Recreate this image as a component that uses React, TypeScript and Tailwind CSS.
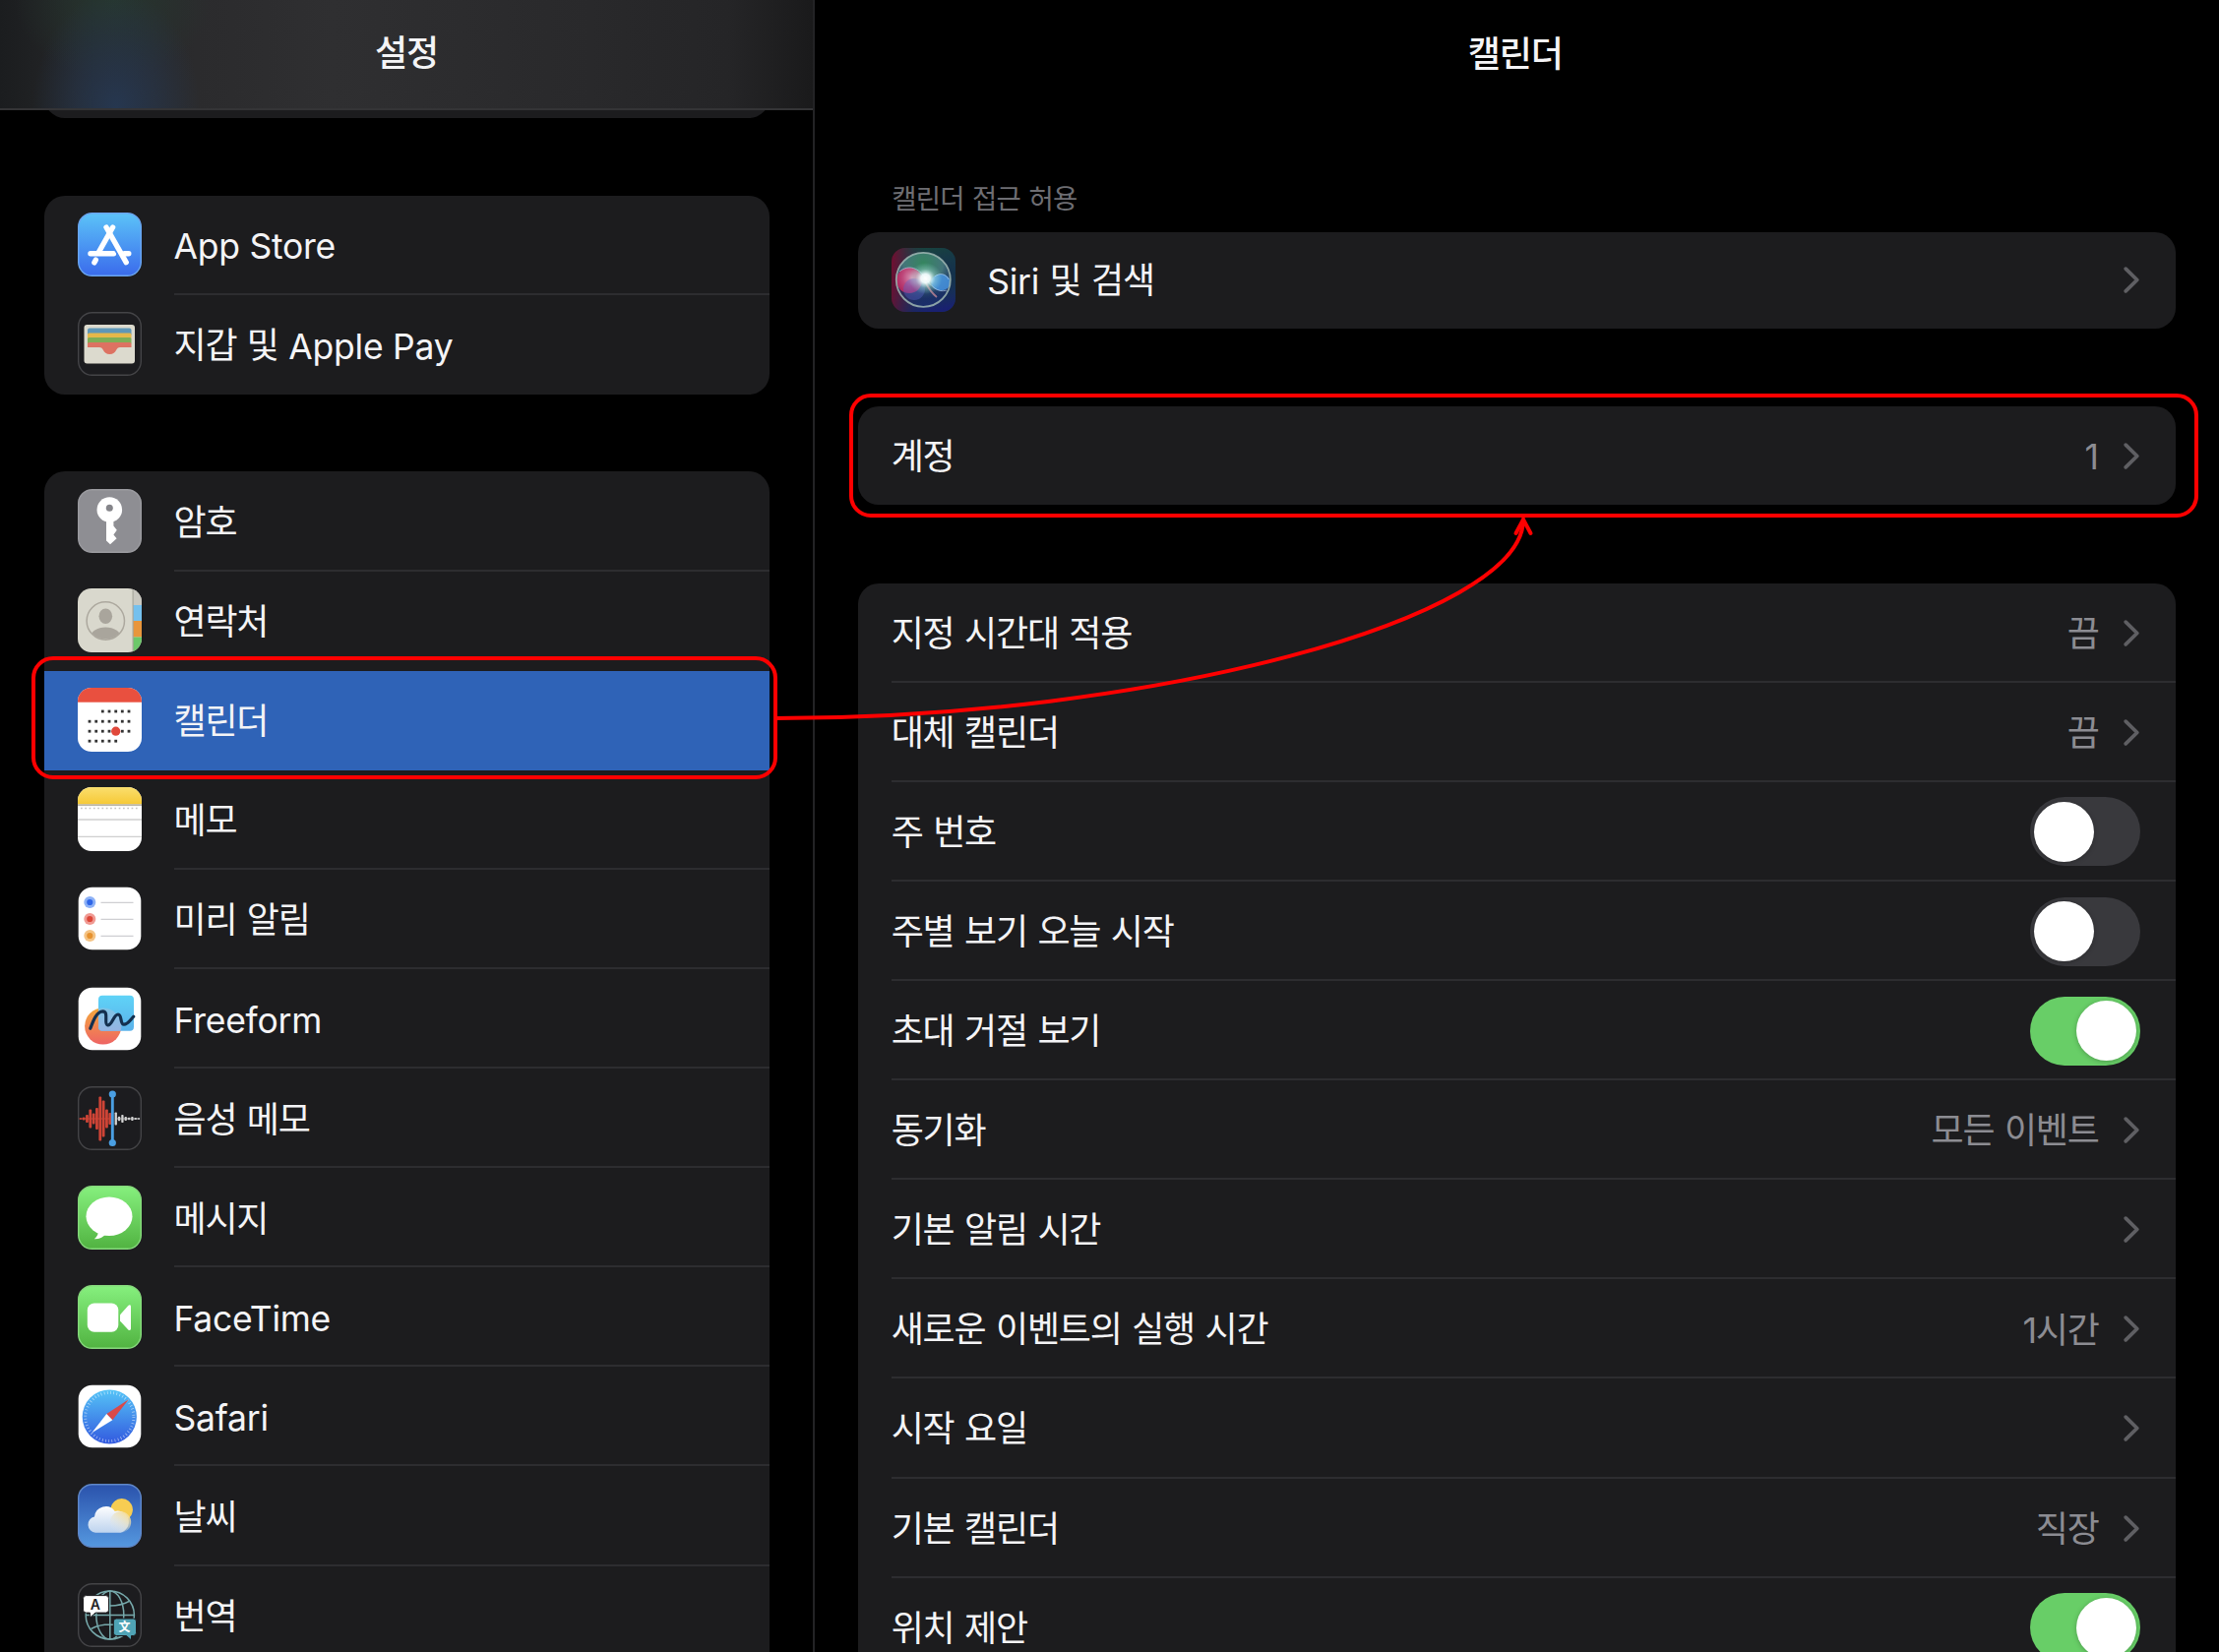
import type { ReactNode } from "react";

/* ---------- icons ---------- */

function Tile({ fill, stroke, children }: { fill: string; stroke?: string; children?: ReactNode }) {
  return (
    <>
      <rect x="0.7" y="0.7" width="63.6" height="63.6" rx="14" fill={fill} stroke={stroke} strokeWidth={stroke ? 1.4 : 0} />
      {children}
    </>
  );
}

function Svg({ children }: { children: ReactNode }) {
  return (
    <svg viewBox="0 0 65 65" className="block size-[65px] shrink-0">
      {children}
    </svg>
  );
}

function VGrad({ id, from, to }: { id: string; from: string; to: string }) {
  return (
    <linearGradient id={id} x1="0" y1="0" x2="0" y2="1">
      <stop offset="0" stopColor={from} />
      <stop offset="1" stopColor={to} />
    </linearGradient>
  );
}

const AppStoreIcon = () => (
  <Svg>
    <VGrad id="as" from="#5cc3f8" to="#3a6bec" />
    <Tile fill="url(#as)" stroke="#6aa5ef" />
    <g stroke="#fff" strokeWidth="5.4" strokeLinecap="round" fill="none">
      <path d="M35.6 15 21.5 40" />
      <path d="M13 41.7h23.5" />
      <path d="M47.5 41.7h4.3" />
      <path d="m29 15 20.2 35.6" />
      <path d="m18.3 48.2-1.4 2.6" />
    </g>
    <path d="m33.4 30.5 9 16" stroke="#4a8cf2" strokeWidth="1.1" />
  </Svg>
);

const WalletIcon = () => (
  <Svg>
    <Tile fill="#1c1c1f" stroke="#444447" />
    <rect x="6.5" y="13" width="51.5" height="39.5" rx="3" fill="#dcdace" />
    <rect x="10" y="16.5" width="44.5" height="8" rx="2" fill="#5f97b8" />
    <rect x="10" y="21.5" width="44.5" height="6" rx="1.5" fill="#e6b84a" />
    <rect x="10" y="26" width="44.5" height="7" rx="1.5" fill="#7fae57" />
    <path d="M10 32.500a1.500 1.500 0 0 1 1.500-1.500h41.500a1.500 1.500 0 0 1 1.500 1.500V36H43c-2 0-3 1-4 3-1 2.200-3 4-6.500 4S27 41.200 26 39c-1-2-2-3-4-3H10z" fill="#dd7262" />
  </Svg>
);

const KeyIcon = () => (
  <Svg>
    <Tile fill="#8e8e93" stroke="#9b9ba0" />
    <circle cx="32.3" cy="21" r="12.8" fill="#fff" />
    <path d="M29 30v22.500l4 3.800 6.600-6.100-3.200-3.600 3.400-4.800-3.400-4.200V30z" fill="#fff" />
    <circle cx="32.3" cy="19.300" r="3.500" fill="#85858a" />
  </Svg>
);

const ContactsIcon = () => (
  <Svg>
    <clipPath id="cc"><rect width="65" height="65" rx="14" /></clipPath>
    <clipPath id="cp"><circle cx="28.300" cy="33" r="18.600" /></clipPath>
    <g clipPath="url(#cc)">
      <rect width="65" height="65" fill="#d9d8cd" />
      <rect x="56" width="9" height="17" fill="#c9c8c0" />
      <rect x="56" y="17" width="9" height="16" fill="#74c0ee" />
      <rect x="56" y="33" width="9" height="16.500" fill="#e8963c" />
      <rect x="56" y="49.500" width="9" height="16" fill="#6cc86a" />
      <rect x="55.500" width="1.200" height="65" fill="#a8a79d" />
    </g>
    <circle cx="28.300" cy="33" r="19.200" fill="none" stroke="#aca89e" strokeWidth="1.500" />
    <ellipse cx="28.300" cy="28.300" rx="6.800" ry="7.800" fill="#a9a59c" />
    <ellipse cx="28.300" cy="50" rx="15.500" ry="10.500" fill="#a9a59c" clipPath="url(#cp)" />
  </Svg>
);

const dotX = [12, 18.7, 25.3, 32, 38.7, 45.3, 52];
const calendarRows = [
  { y: 24, xs: dotX.slice(2) },
  { y: 34.2, xs: dotX },
  { y: 44.2, xs: dotX },
  { y: 54.2, xs: dotX.slice(0, 5) },
];

const CalendarIcon = () => (
  <Svg>
    <clipPath id="cal"><rect width="65" height="65" rx="14" /></clipPath>
    <g clipPath="url(#cal)">
      <rect width="65" height="65" fill="#fff" />
      <rect width="65" height="14.700" fill="#e9503f" />
    </g>
    {calendarRows.map((r) =>
      r.xs.map((x) => <rect key={`${x}-${r.y}`} x={x - 1.4} y={r.y - 1.4} width="2.800" height="2.800" fill="#333" />),
    )}
    <circle cx="38.700" cy="44.200" r="4.600" fill="#e0483b" />
  </Svg>
);

const NotesIcon = () => (
  <Svg>
    <VGrad id="nt" from="#fade6e" to="#f6c935" />
    <clipPath id="nc"><rect width="65" height="65" rx="14" /></clipPath>
    <g clipPath="url(#nc)">
      <rect width="65" height="65" fill="#fff" />
      <rect width="65" height="17.500" fill="url(#nt)" />
      <rect y="17.300" width="65" height="1.800" fill="#b9b5a6" />
      <path d="M3 21.600h60" stroke="#c4c4c4" strokeWidth="1.500" strokeDasharray="1.700 2.600" />
      <path d="M0 33h65M0 50.300h65" stroke="#cfcfcf" strokeWidth="1.300" />
    </g>
  </Svg>
);

const RemindersIcon = () => (
  <Svg>
    <Tile fill="#fff" />
    {[
      { y: 16, a: "#8db1f6", b: "#2e66e8" },
      { y: 33, a: "#f09a93", b: "#dc4638" },
      { y: 50, a: "#f4c384", b: "#e6922f" },
    ].map((d) => (
      <g key={d.y}>
        <circle cx="12.300" cy={d.y} r="6" fill={d.a} />
        <circle cx="12.300" cy={d.y} r="3.100" fill={d.b} />
        <path d={`M23.500 ${d.y + 0.3}h33`} stroke="#cfcfd2" strokeWidth="1.200" />
      </g>
    ))}
  </Svg>
);

const FreeformIcon = () => (
  <Svg>
    <VGrad id="ffc" from="#f3a83c" to="#ee6464" />
    <VGrad id="ffb" from="#5fd3f7" to="#5bb2ea" />
    <VGrad id="ffo" from="#7fc4e6" to="#a3abe0" />
    <clipPath id="ffk"><rect x="21" y="8.700" width="36" height="36" rx="4" /></clipPath>
    <Tile fill="#fff" />
    <circle cx="25.700" cy="40" r="18.600" fill="url(#ffc)" />
    <rect x="21" y="8.700" width="36" height="36" rx="4" fill="url(#ffb)" />
    <circle cx="25.700" cy="40" r="18.600" fill="url(#ffo)" clipPath="url(#ffk)" />
    <path
      d="M12.800 42.300C15.500 35 19 25 25.500 24.800c6.500 0 .5 13.700 5 14.200 4.500.3 6-11.200 10.500-11 4.500.3 1.500 10.200 6 10.200 4 0 6.500-4.700 9.800-8"
      fill="none" stroke="#14304f" strokeWidth="3.200" strokeLinecap="round"
    />
  </Svg>
);

const redBars = [1.5, 3, 8, 19, 11, 22, 45, 37, 19, 12];
const whiteBars = [13, 4.5, 8, 4, 2.5, 4, 2, 1.5];

const VoiceMemosIcon = () => (
  <Svg>
    <Tile fill="#1c1c1f" stroke="#444447" />
    {redBars.map((h, i) => (
      <rect key={i} x={1.4 + i * 3.33} y={33 - h / 2} width="2.800" height={h} rx="1" fill="#cf4436" />
    ))}
    {whiteBars.map((h, i) => (
      <rect key={i} x={37.6 + i * 3.33} y={33 - h / 2} width="2.300" height={h} rx="0.800" fill="#d4d4d4" />
    ))}
    <path d="M2 33h31" stroke="#cf4436" strokeWidth="1" />
    <path d="M39 33h24" stroke="#c8c8c8" strokeWidth="0.900" />
    <path d="M35.300 8v49.500" stroke="#4a9fe3" strokeWidth="2.900" />
    <circle cx="35.300" cy="8" r="3.600" fill="#4a9fe3" />
    <circle cx="35.300" cy="57.500" r="3.600" fill="#4a9fe3" />
  </Svg>
);

const MessagesIcon = () => (
  <Svg>
    <VGrad id="ms" from="#86f07e" to="#51b341" />
    <Tile fill="url(#ms)" stroke="#86d97c" />
    <ellipse cx="32" cy="31.200" rx="23.500" ry="19.800" fill="#fff" />
    <path d="M21 46c0 3.500-1.500 6-4.200 8.300 5 .2 9-1.800 11.700-5z" fill="#fff" />
  </Svg>
);

const FaceTimeIcon = () => (
  <Svg>
    <VGrad id="ft" from="#86f07e" to="#51b341" />
    <Tile fill="url(#ft)" stroke="#86d97c" />
    <rect x="9.800" y="18.500" width="31.500" height="29.300" rx="7" fill="#fff" />
    <path d="M43 30.200 51.300 21c1.200-1.300 2.700-.8 2.700.8v22.800c0 1.500-1.500 2-2.700.8L43 36.500z" fill="#fff" />
  </Svg>
);

const SafariIcon = () => (
  <Svg>
    <VGrad id="sf" from="#55c4f7" to="#3259df" />
    <Tile fill="#fff" />
    <circle cx="32.300" cy="33" r="27.600" fill="url(#sf)" />
    <circle cx="32.300" cy="33" r="24.600" fill="none" stroke="#fff" strokeOpacity="0.550" strokeWidth="3" strokeDasharray="0.800 2.420" />
    <path d="M51.800 15.200 35.300 36.200l-6-6.200z" fill="#d9494a" />
    <path d="M14.300 49.300 29.300 30l6 6.200z" fill="#fff" />
  </Svg>
);

const WeatherIcon = () => (
  <Svg>
    <VGrad id="we" from="#2a52ac" to="#5598df" />
    <linearGradient id="wc" gradientUnits="userSpaceOnUse" x1="28" y1="22" x2="28" y2="50">
      <stop offset="0" stopColor="#ffffff" />
      <stop offset="1" stopColor="#bdd3ee" />
    </linearGradient>
    <linearGradient id="wd" gradientUnits="userSpaceOnUse" x1="48" y1="28" x2="34" y2="46">
      <stop offset="0" stopColor="#f6dc95" />
      <stop offset="1" stopColor="#dfe7ef" stopOpacity="0" />
    </linearGradient>
    <Tile fill="url(#we)" stroke="#5f87c8" />
    <circle cx="44.700" cy="26.300" r="11.200" fill="#f7cd52" />
    <path d="M18 49.700a8.200 8.200 0 0 1-1-16.200 11.500 11.500 0 0 1 20.800-5.600A11 11 0 1 1 43.500 49.700z" fill="url(#wc)" />
    <circle cx="43.500" cy="39" r="10.700" fill="url(#wd)" />
  </Svg>
);

const TranslateIcon = () => (
  <Svg>
    <Tile fill="#1c1c1f" stroke="#444447" />
    <g fill="none" stroke="#76a9ab" strokeWidth="1.500">
      <circle cx="32.800" cy="32.500" r="24.600" />
      <ellipse cx="32.800" cy="32.500" rx="14" ry="24.600" />
      <path d="M32.800 8v49M8.200 32.500h49.200M13.500 18.500c11 6 27.600 6 38.600 0M13.500 46.500c11-6 27.600-6 38.600 0" />
    </g>
    <path d="M8.500 12.600h20a3 3 0 0 1 3 3v11.500a3 3 0 0 1-3 3H18l-5.600 5v-5H8.500a3 3 0 0 1-3-3V15.600a3 3 0 0 1 3-3z" fill="#fff" stroke="#1c1c1f" strokeWidth="1" />
    <path d="M39.300 36h17.200a3 3 0 0 1 3 3v11.500a3 3 0 0 1-3 3h-2v4.500l-5-4.500H39.300a3 3 0 0 1-3-3V39a3 3 0 0 1 3-3z" fill="#4fa3b5" stroke="#1c1c1f" strokeWidth="1" />
    <text x="17.900" y="26.500" textAnchor="middle" className="fill-[#222] font-['Inter',sans-serif] text-[14px] font-semibold">A</text>
    <text x="47.600" y="49.300" textAnchor="middle" className="fill-white font-['Noto_Sans_CJK_SC',sans-serif] text-[12px] font-bold">文</text>
  </Svg>
);

const SiriIcon = () => (
  <Svg>
    <defs>
      <linearGradient id="sb" x1="0" y1="0.400" x2="1" y2="0.550">
        <stop offset="0" stopColor="#6d1032" />
        <stop offset="0.450" stopColor="#1d2b50" />
        <stop offset="1" stopColor="#12304a" />
      </linearGradient>
      <linearGradient id="sg" x1="0.400" y1="0" x2="0.600" y2="1">
        <stop offset="0" stopColor="#17493a" stopOpacity="0.850" />
        <stop offset="0.500" stopColor="#1b3f50" stopOpacity="0.100" />
        <stop offset="1" stopColor="#1a1f76" stopOpacity="0.900" />
      </linearGradient>
      <linearGradient id="sm" x1="0" y1="0" x2="1" y2="0">
        <stop offset="0" stopColor="#fff" stopOpacity="0" />
        <stop offset="0.500" stopColor="#fff" />
      </linearGradient>
      <mask id="sx"><rect width="65" height="65" fill="url(#sm)" /></mask>
      <radialGradient id="sw" cx="0.500" cy="0.500" r="0.500">
        <stop offset="0" stopColor="#fff" />
        <stop offset="0.280" stopColor="#f4feff" stopOpacity="0.950" />
        <stop offset="0.600" stopColor="#b9f2e8" stopOpacity="0.350" />
        <stop offset="1" stopColor="#8fe6d8" stopOpacity="0" />
      </radialGradient>
      <radialGradient id="st" cx="0.500" cy="0.200" r="0.650">
        <stop offset="0" stopColor="#35855f" />
        <stop offset="0.550" stopColor="#44757a" />
        <stop offset="1" stopColor="#1c3370" stopOpacity="0.500" />
      </radialGradient>
      <radialGradient id="sp" cx="0.600" cy="0.400" r="0.600">
        <stop offset="0" stopColor="#f09ac0" />
        <stop offset="0.600" stopColor="#d6467e" />
        <stop offset="1" stopColor="#c52a62" />
      </radialGradient>
      <clipPath id="sk"><circle cx="32.300" cy="32.300" r="27.500" /></clipPath>
    </defs>
    <rect width="65" height="65" rx="14" fill="url(#sb)" />
    <rect width="65" height="65" rx="14" fill="url(#sg)" mask="url(#sx)" />
    <g clipPath="url(#sk)">
      <circle cx="32.300" cy="32.300" r="28" fill="url(#st)" />
      <circle cx="18" cy="33" r="13" fill="url(#sp)" fillOpacity="0.850" />
      <circle cx="23" cy="42" r="11" fill="#5b62c8" fillOpacity="0.400" />
      <ellipse cx="50" cy="35" rx="10" ry="8.500" fill="#4a9ae8" fillOpacity="0.800" />
      <path d="M34 34c4 8 7 12 12 16" stroke="#d7909c" strokeWidth="1.800" opacity="0.700" fill="none" />
      <path d="M8 24c10-8 20-3 26 6s13 16 22 13M44 29c5-4 11-3 14 3" stroke="#c6d8f4" strokeWidth="1" opacity="0.600" fill="none" />
    </g>
    <ellipse cx="34.500" cy="31" rx="17" ry="16" fill="url(#sw)" />
    <circle cx="32.300" cy="32.300" r="27.500" fill="none" stroke="#9fb7b3" strokeOpacity="0.850" strokeWidth="1.800" />
  </Svg>
);

const Chevron = () => (
  <svg viewBox="0 0 18 29" className="block h-[29px] w-[18px] shrink-0">
    <path d="M3.200 3.200 14.800 14.500 3.200 25.800" fill="none" stroke="#5f5f63" strokeWidth="3.800" strokeLinecap="round" strokeLinejoin="round" />
  </svg>
);

/* ---------- text ---------- */

const Ko = ({ children }: { children: string }) => (
  <span className="whitespace-pre text-[36px] leading-[48px] tracking-[-1.2px] [word-spacing:1.600px]">{children}</span>
);

const En = ({ children }: { children: string }) => (
  <span className="inline-block translate-y-px whitespace-pre text-[35.5px] leading-[48px] tracking-[-0.25px]">{children}</span>
);

/* ---------- building blocks ---------- */

function Callout({ className }: { className: string }) {
  return <div className={`pointer-events-none absolute z-10 rounded-[22px] border-4 border-[#ff0000] ${className}`} />;
}

function AppRow({ icon, children, divider = true, selected = false }: { icon: ReactNode; children: ReactNode; divider?: boolean; selected?: boolean }) {
  return (
    <div className={`relative flex h-[101.1px] items-center pl-[34.500px] ${selected ? "bg-[#2f63b7]" : ""}`}>
      <div className="pb-[1px]">{icon}</div>
      <div className={`ml-[32.500px] flex h-full flex-1 items-center pt-[4px] ${divider ? "border-b-2 border-[#2d2d30]" : "border-b-2 border-transparent"}`}>
        <div>{children}</div>
      </div>
      {selected && <Callout className="-bottom-[9.500px] -left-[13px] -right-[7.500px] -top-[15px]" />}
    </div>
  );
}

function Toggle({ on }: { on: boolean }) {
  return (
    <div className={`flex h-[70px] w-[112px] items-center rounded-full px-[4px] ${on ? "justify-end bg-[#68ce67]" : "bg-[#39393d]"}`}>
      <div className="size-[61px] rounded-full bg-white shadow-[0_1px_5px_rgba(0,0,0,0.25)]" />
    </div>
  );
}

function SettingRow({ label, value, control, divider = true }: { label: string; value?: ReactNode; control?: ReactNode; divider?: boolean }) {
  return (
    <div className="pl-[34px]">
      <div className={`flex h-[101.1px] items-center justify-between pr-[36px] ${divider ? "border-b-2 border-[#2d2d30] pt-[2px]" : ""}`}>
        <div className="pt-[1px]"><Ko>{label}</Ko></div>
        {control ?? (
          <div className="flex items-center gap-[24px] text-[#8c8c92]">
            {value && <div className="pt-[1.500px]">{value}</div>}
            <Chevron />
          </div>
        )}
      </div>
    </div>
  );
}

const apps: { icon: ReactNode; label: ReactNode; selected?: boolean; divider?: boolean }[] = [
  { icon: <KeyIcon />, label: <Ko>암호</Ko> },
  { icon: <ContactsIcon />, label: <Ko>연락처</Ko>, divider: false },
  { icon: <CalendarIcon />, label: <Ko>캘린더</Ko>, selected: true, divider: false },
  { icon: <NotesIcon />, label: <Ko>메모</Ko> },
  { icon: <RemindersIcon />, label: <Ko>미리 알림</Ko> },
  { icon: <FreeformIcon />, label: <En>Freeform</En> },
  { icon: <VoiceMemosIcon />, label: <Ko>음성 메모</Ko> },
  { icon: <MessagesIcon />, label: <Ko>메시지</Ko> },
  { icon: <FaceTimeIcon />, label: <En>FaceTime</En> },
  { icon: <SafariIcon />, label: <En>Safari</En> },
  { icon: <WeatherIcon />, label: <Ko>날씨</Ko> },
  { icon: <TranslateIcon />, label: <Ko>번역</Ko> },
];

export default function App() {
  return (
    <div className="relative flex h-[1679px] w-[2255px] overflow-hidden bg-black font-['Inter','Noto_Sans_CJK_KR',sans-serif] text-[#f4f4f6]">
      <aside className="h-full w-[828px] shrink-0 border-r-2 border-[#232325]">
        <header className="flex h-[112px] items-center justify-center border-b-2 border-[#343436] bg-[radial-gradient(ellipse_85px_120px_at_118px_110px,rgba(38,56,82,0.95),rgba(38,56,82,0.5)_50%,transparent),radial-gradient(ellipse_100px_80px_at_115px_0px,rgba(38,58,48,0.8),rgba(38,58,48,0.4)_50%,transparent),linear-gradient(to_right,#1b1d1f_0,#252628_80px,#2b2b2d_200px,#2f2f31_340px,#29292b_600px,#252527_740px,#1a1a1b_826px)] pb-[2px]">
          <h1 className="text-[36px] font-medium leading-[48px] tracking-[-1.200px]">설정</h1>
        </header>
        <div className="ml-[44.500px] mr-[44px] flex h-[7.500px] flex-col justify-end overflow-hidden">
          <div className="h-[50px] shrink-0 rounded-[21px] bg-[#1c1c1e]" />
        </div>

        <section className="ml-[44.500px] mr-[44px] mt-[79px] rounded-[21px] bg-[#1c1c1e]">
          <AppRow icon={<AppStoreIcon />}><En>App Store</En></AppRow>
          <AppRow icon={<WalletIcon />} divider={false}><Ko>지갑 및 </Ko><En>Apple Pay</En></AppRow>
        </section>

        <section className="ml-[44.500px] mr-[44px] mt-[78.800px] rounded-t-[21px] bg-[#1c1c1e]">
          {apps.map((a, i) => (
            <AppRow key={i} icon={a.icon} selected={a.selected} divider={a.divider}>{a.label}</AppRow>
          ))}
        </section>
      </aside>

      <main className="flex h-full flex-1 flex-col pl-[43.700px] pr-[44.300px]">
        <header className="flex h-[112px] shrink-0 items-center justify-center pb-[3px] pr-[3px]">
          <h1 className="text-[36px] font-medium leading-[48px] tracking-[-1.200px]">캘린더</h1>
        </header>

        <p className="mt-[70px] pl-[34.500px] text-[27.500px] leading-[40px] tracking-[-0.8px] text-[#6e6e73] [word-spacing:1.500px]">캘린더 접근 허용</p>
        <section className="mt-[13.700px] flex h-[98px] shrink-0 items-center rounded-[21px] bg-[#1c1c1e] pl-[34px] pr-[36px]">
          <SiriIcon />
          <div className="ml-[32.500px] flex-1 pt-[2px]"><En>Siri</En><Ko> 및 검색</Ko></div>
          <Chevron />
        </section>

        <section className="relative mt-[79.500px] h-[100px] shrink-0 rounded-[21px] bg-[#1c1c1e]">
          <SettingRow label="계정" value={<En>1</En>} divider={false} />
          <Callout className="-bottom-[12.500px] -left-[8.500px] -right-[23.300px] -top-[13px]" />
        </section>

        <section className="mt-[79.500px] shrink-0 rounded-t-[21px] bg-[#1c1c1e]">
          <SettingRow label="지정 시간대 적용" value={<Ko>끔</Ko>} />
          <SettingRow label="대체 캘린더" value={<Ko>끔</Ko>} />
          <SettingRow label="주 번호" control={<Toggle on={false} />} />
          <SettingRow label="주별 보기 오늘 시작" control={<Toggle on={false} />} />
          <SettingRow label="초대 거절 보기" control={<Toggle on />} />
          <SettingRow label="동기화" value={<Ko>모든 이벤트</Ko>} />
          <SettingRow label="기본 알림 시간" />
          <SettingRow label="새로운 이벤트의 실행 시간" value={<Ko>1시간</Ko>} />
          <SettingRow label="시작 요일" />
          <SettingRow label="기본 캘린더" value={<Ko>직장</Ko>} />
          <SettingRow label="위치 제안" control={<Toggle on />} />
        </section>
      </main>

      {/* connector from the selected app to the accounts row */}
      <svg viewBox="0 0 780 224" className="pointer-events-none absolute left-[788px] top-[516px] z-20 h-[224px] w-[780px]">
        <g fill="none" stroke="#ff0000" strokeWidth="4" strokeLinecap="round">
          <path d="M0 214C380 214 760 113 760 12" />
          <path d="M752.500 26 760 12l7.500 14" />
        </g>
      </svg>
    </div>
  );
}
